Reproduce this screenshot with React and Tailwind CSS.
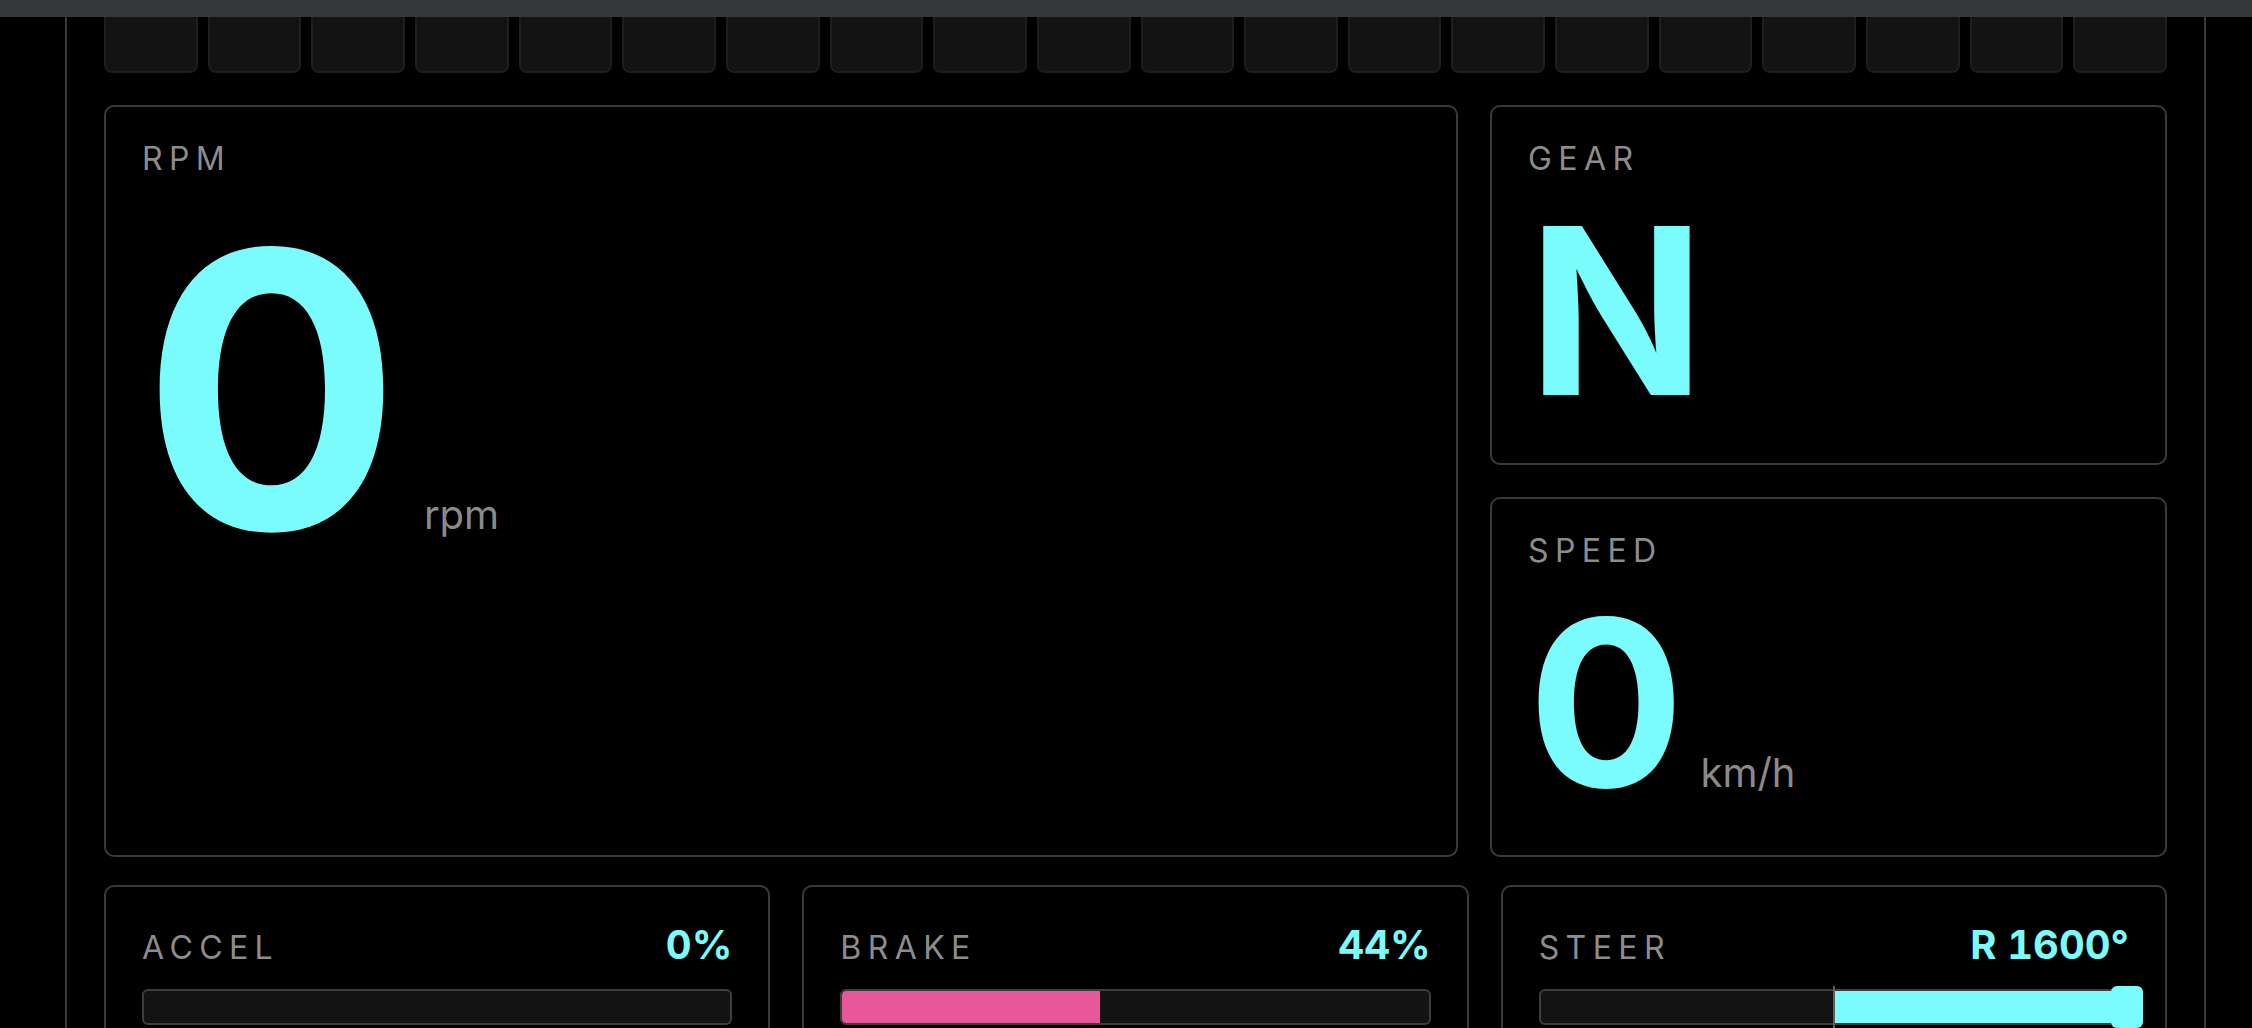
import { useState } from "react";

// live telemetry snapshot
const telemetry = {
  rpm: 0,
  gear: "N",
  speed: 0,
  accel: 0,
  brake: 44,
  steer: 1600,
  steerMax: 1600,
};

const SEGMENTS = 20;

function Label({ children }) {
  return (
    <div className="text-[32px] leading-none font-normal tracking-[0.2em] text-[#8c8c8c]">
      {children}
    </div>
  );
}

function Card({ className = "", children }) {
  return (
    <div className={`rounded-[10px] border-2 border-[#3a3a3a] bg-black p-9 ${className}`}>
      {children}
    </div>
  );
}

// horizontal pedal bar, fills from the left
function PedalBar({ pct, fill }) {
  return (
    <div className="h-[36px] overflow-hidden rounded-[6px] border-2 border-[#3d3d3d] bg-[#131313]">
      <div className={`h-full rounded-l-[4px] ${fill}`} style={{ width: `${pct}%` }} />
    </div>
  );
}

// steering bar, fills out from the centre with a knob at the current angle
function SteerBar({ value, max }) {
  const ratio = Math.max(-1, Math.min(1, value / max));
  const half = Math.abs(ratio) * 50;
  return (
    <div className="relative h-[36px] rounded-[6px] border-2 border-[#3d3d3d] bg-[#131313]">
      <div
        className="absolute inset-y-0 bg-[#7afcfc]"
        style={ratio >= 0 ? { left: "50%", width: `${half}%` } : { right: "50%", width: `${half}%` }}
      />
      <div className="absolute -top-[5px] -bottom-[5px] left-1/2 w-[2px] -translate-x-1/2 bg-[#5e5e5e]" />
      <div
        className="absolute -top-[5px] -bottom-[5px] w-[32px] -translate-x-1/2 rounded-[6px] bg-[#7afcfc]"
        style={{ left: `${50 + ratio * 50}%` }}
      />
    </div>
  );
}

function InputCard({ label, value, children }) {
  return (
    <Card>
      <div className="flex items-baseline justify-between">
        <Label>{label}</Label>
        <div className="text-[40px] leading-[44px] font-bold tabular-nums text-[#7afcfc]">{value}</div>
      </div>
      <div className="mt-[22px]">{children}</div>
    </Card>
  );
}

export default function App() {
  const [data] = useState(telemetry);
  const steerText = `${data.steer >= 0 ? "R" : "L"}\u00a0${Math.abs(data.steer)}°`;

  return (
    <div className="h-screen overflow-hidden bg-black font-[Inter,sans-serif]">
      {/* window strip */}
      <div className="h-[17px] bg-[#36373a]" />

      <div className="ml-[65px] w-[2141px] border-x-2 border-[#3a3a3a] px-[37px]">
        {/* shift light segments */}
        <div className="grid grid-cols-20 gap-[10px]">
          {Array.from({ length: SEGMENTS }).map((_, i) => (
            <div
              key={i}
              className="h-[56px] rounded-b-[8px] border-2 border-t-0 border-[#1e1e1e] bg-[#131313]"
            />
          ))}
        </div>

        <div className="mt-8 grid h-[748px] grid-cols-[2fr_1fr] gap-8">
          <Card>
            <Label>RPM</Label>
            <div className="mt-[23px] flex items-baseline">
              <span className="text-[384px] leading-none font-bold text-[#7afcfc]">{data.rpm}</span>
              <span className="ml-[23px] text-[40px] leading-none text-[#8a8a8a]">rpm</span>
            </div>
          </Card>

          <div className="grid grid-rows-2 gap-8">
            <Card>
              <Label>GEAR</Label>
              <div className="mt-5 text-[232px] leading-none font-bold text-[#7afcfc]">{data.gear}</div>
            </Card>
            <Card>
              <Label>SPEED</Label>
              <div className="mt-5 flex items-baseline">
                <span className="text-[232px] leading-none font-bold text-[#7afcfc]">{data.speed}</span>
                <span className="ml-4 text-[40px] leading-none text-[#8a8a8a]">km/h</span>
              </div>
            </Card>
          </div>
        </div>

        <div className="mt-8 grid grid-cols-3 gap-8">
          <InputCard label="ACCEL" value={`${data.accel}%`}>
            <PedalBar pct={data.accel} fill="bg-[#7afcfc]" />
          </InputCard>
          <InputCard label="BRAKE" value={`${data.brake}%`}>
            <PedalBar pct={data.brake} fill="bg-[#e8579a]" />
          </InputCard>
          <InputCard label="STEER" value={steerText}>
            <SteerBar value={data.steer} max={data.steerMax} />
          </InputCard>
        </div>
      </div>
    </div>
  );
}
